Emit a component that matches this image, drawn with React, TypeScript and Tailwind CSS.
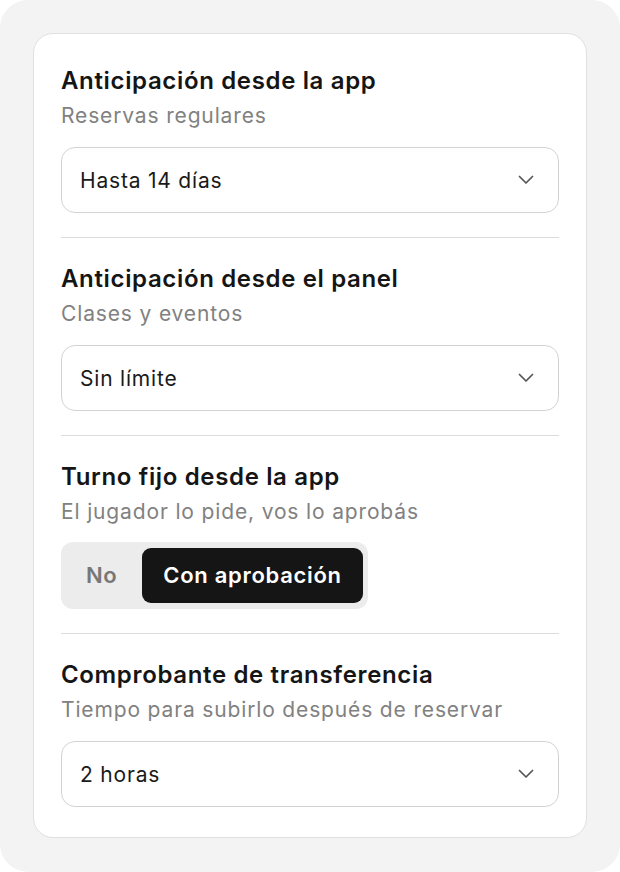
function Chevron() {
  return (
    <svg width="16" height="10" viewBox="0 0 16 10" fill="none" className="text-[#555]">
      <path d="M1.5 1.5 8 8l6.5-6.5" stroke="currentColor" strokeWidth="1.7" strokeLinecap="round" strokeLinejoin="round" />
    </svg>
  );
}

function Select({ value }: { value: string }) {
  return (
    <div className="mt-[18px] flex h-[66px] items-center justify-between rounded-[14px] border-[1.5px] border-[#d3d3d6] bg-white pl-[18px] pr-[24px]">
      <span className="pt-px text-[21px] tracking-[0.8px] text-[#1a1a1a]">{value}</span>
      <Chevron />
    </div>
  );
}

function Heading({ title, subtitle }: { title: string; subtitle: string }) {
  return (
    <>
      <h3 className="text-[24px] font-semibold leading-[28px] tracking-[0.65px] text-[#151515]">{title}</h3>
      <p className="mt-2 text-[21px] leading-[26px] tracking-[0.85px] text-[#818181]">{subtitle}</p>
    </>
  );
}

export default function App() {
  return (
    <div className="bg-white" style={{ fontFamily: 'Inter, "Noto Sans", sans-serif' }}>
      <div className="h-[872px] w-[620px] rounded-[28px] bg-[#f3f3f3] p-[33px]">
        <div className="rounded-[20px] border-[1.5px] border-[#e0e0e3] bg-white px-[27px] pb-[30px] pt-[33px]">
          <section className="pb-6">
            <Heading title="Anticipación desde la app" subtitle="Reservas regulares" />
            <Select value="Hasta 14 días" />
          </section>

          <section className="border-t border-[#dcdcdf] pb-6 pt-[27px]">
            <Heading title="Anticipación desde el panel" subtitle="Clases y eventos" />
            <Select value="Sin límite" />
          </section>

          <section className="border-t border-[#dcdcdf] pb-6 pt-[27px]">
            <Heading title="Turno fijo desde la app" subtitle="El jugador lo pide, vos lo aprobás" />
            <div className="mt-[17px] inline-flex h-[67px] items-stretch gap-1.5 rounded-[12px] bg-[#ececec] py-1.5 pl-1.5 pr-[5px]">
              <button className="px-[19px] text-[22px] font-semibold tracking-[0.6px] text-[#777777]">No</button>
              <button className="rounded-[9px] bg-[#151515] px-[21px] text-[22px] font-semibold tracking-[0.7px] text-white">
                Con aprobación
              </button>
            </div>
          </section>

          <section className="border-t border-[#dcdcdf] pt-[27px]">
            <Heading title="Comprobante de transferencia" subtitle="Tiempo para subirlo después de reservar" />
            <Select value="2 horas" />
          </section>
        </div>
      </div>
    </div>
  );
}
